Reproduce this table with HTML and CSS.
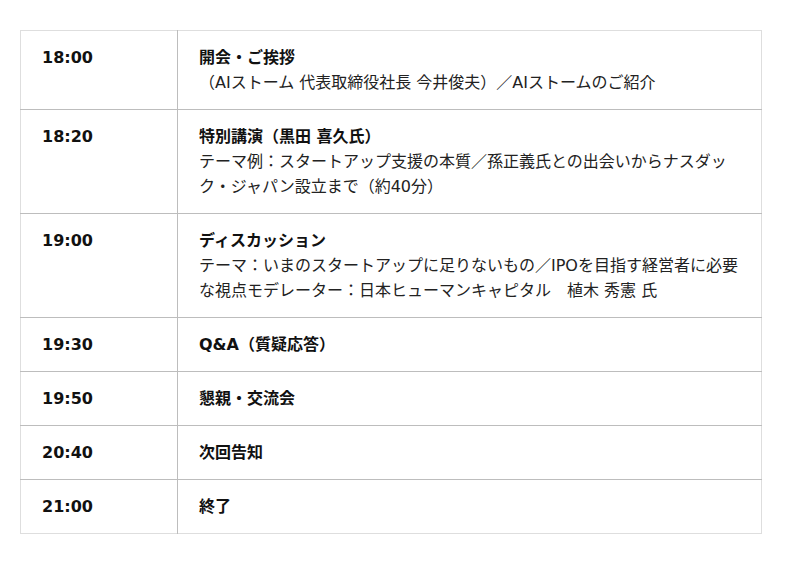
FILE: index.html
```html
<!DOCTYPE html>
<html lang="ja">
<head>
<meta charset="utf-8">
<title>タイムテーブル</title>
<link rel="stylesheet" href="styles.css">
</head>
<body>
<div class="page">
  <table class="schedule">
    <tbody>
      <tr>
        <td class="time">18:00</td>
        <td class="content"><div class="title">開会・ご挨拶</div><div class="desc">（AIストーム 代表取締役社長 今井俊夫）／AIストームのご紹介</div></td>
      </tr>
      <tr>
        <td class="time">18:20</td>
        <td class="content"><div class="title">特別講演（黒田 喜久氏）</div><div class="desc">テーマ例：スタートアップ支援の本質／孫正義氏との出会いからナスダック・ジャパン設立まで（約40分）</div></td>
      </tr>
      <tr>
        <td class="time">19:00</td>
        <td class="content"><div class="title">ディスカッション</div><div class="desc">テーマ：いまのスタートアップに足りないもの／IPOを目指す経営者に必要な視点モデレーター：日本ヒューマンキャピタル　植木 秀憲 氏</div></td>
      </tr>
      <tr>
        <td class="time">19:30</td>
        <td class="content"><div class="title">Q&amp;A（質疑応答）</div></td>
      </tr>
      <tr>
        <td class="time">19:50</td>
        <td class="content"><div class="title">懇親・交流会</div></td>
      </tr>
      <tr>
        <td class="time">20:40</td>
        <td class="content"><div class="title">次回告知</div></td>
      </tr>
      <tr>
        <td class="time">21:00</td>
        <td class="content"><div class="title">終了</div></td>
      </tr>
    </tbody>
  </table>
</div>
</body>
</html>
```

FILE: styles.css
```css
html, body {
  margin: 0;
  padding: 0;
  background: #ffffff;
}
body {
  font-family: "DejaVu Sans", "Noto Sans CJK JP", sans-serif;
  font-size: 16px;
  line-height: 25px;
  color: #222;
}
.page {
  padding: 30px 0 0 20px;
}
.schedule {
  width: 742px;
  border-collapse: collapse;
  border: 1px solid #dedede;
}
.schedule td {
  border-top: 1px solid #bdbdbd;
  padding: 14px 21px;
  vertical-align: top;
  text-align: left;
}
.schedule tr:first-child td {
  border-top: 1px solid #dedede;
}
.time {
  width: 114px;
  font-weight: bold;
  color: #111;
  border-right: 1px solid #bdbdbd;
}
.content {
  padding-right: 14px;
}
.title {
  font-weight: bold;
  color: #111;
}
.desc {
  color: #222;
}
```
